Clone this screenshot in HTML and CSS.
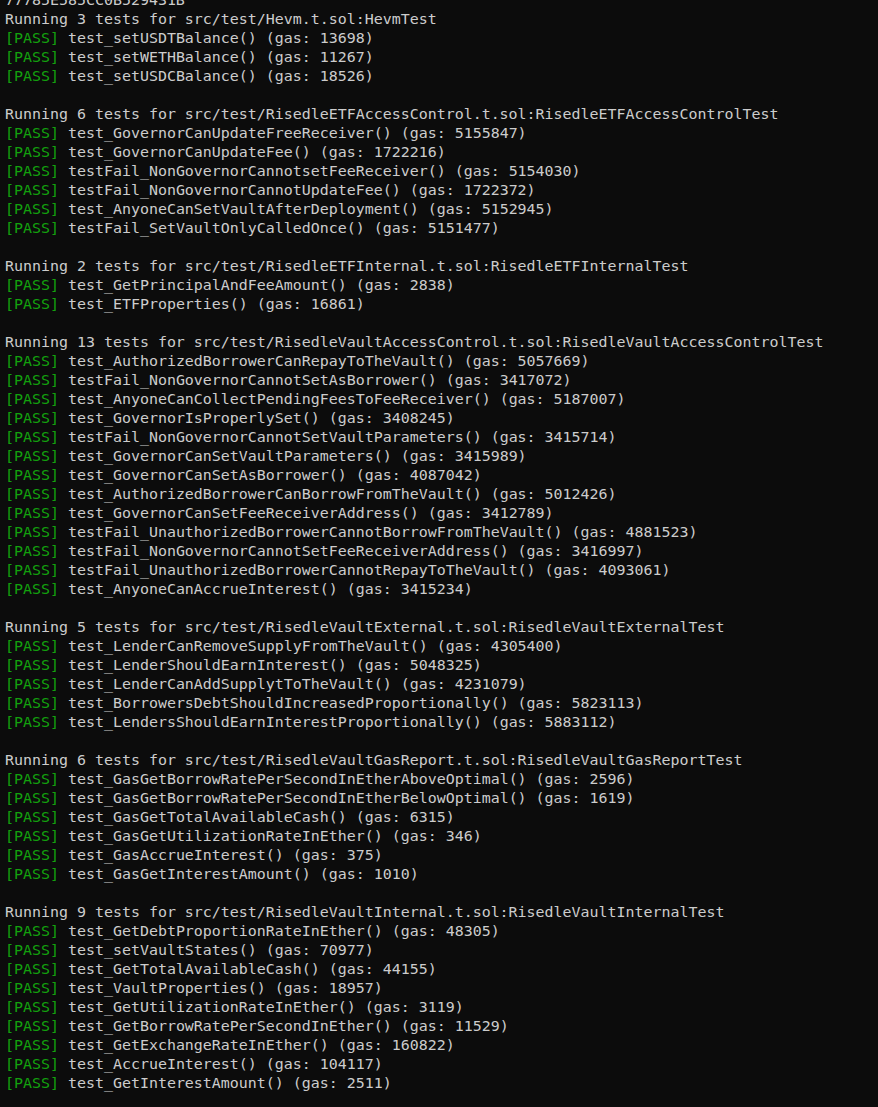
FILE: index.html
```html
<!DOCTYPE html>
<html>
<head>
<meta charset="utf-8">
<link rel="stylesheet" href="styles.css">
</head>
<body>
<pre class="term">77785E585CC0B529431B
Running 3 tests for src/test/Hevm.t.sol:HevmTest
<span class="pass">[PASS]</span> test_setUSDTBalance() (gas: 13698)
<span class="pass">[PASS]</span> test_setWETHBalance() (gas: 11267)
<span class="pass">[PASS]</span> test_setUSDCBalance() (gas: 18526)

Running 6 tests for src/test/RisedleETFAccessControl.t.sol:RisedleETFAccessControlTest
<span class="pass">[PASS]</span> test_GovernorCanUpdateFreeReceiver() (gas: 5155847)
<span class="pass">[PASS]</span> test_GovernorCanUpdateFee() (gas: 1722216)
<span class="pass">[PASS]</span> testFail_NonGovernorCannotsetFeeReceiver() (gas: 5154030)
<span class="pass">[PASS]</span> testFail_NonGovernorCannotUpdateFee() (gas: 1722372)
<span class="pass">[PASS]</span> test_AnyoneCanSetVaultAfterDeployment() (gas: 5152945)
<span class="pass">[PASS]</span> testFail_SetVaultOnlyCalledOnce() (gas: 5151477)

Running 2 tests for src/test/RisedleETFInternal.t.sol:RisedleETFInternalTest
<span class="pass">[PASS]</span> test_GetPrincipalAndFeeAmount() (gas: 2838)
<span class="pass">[PASS]</span> test_ETFProperties() (gas: 16861)

Running 13 tests for src/test/RisedleVaultAccessControl.t.sol:RisedleVaultAccessControlTest
<span class="pass">[PASS]</span> test_AuthorizedBorrowerCanRepayToTheVault() (gas: 5057669)
<span class="pass">[PASS]</span> testFail_NonGovernorCannotSetAsBorrower() (gas: 3417072)
<span class="pass">[PASS]</span> test_AnyoneCanCollectPendingFeesToFeeReceiver() (gas: 5187007)
<span class="pass">[PASS]</span> test_GovernorIsProperlySet() (gas: 3408245)
<span class="pass">[PASS]</span> testFail_NonGovernorCannotSetVaultParameters() (gas: 3415714)
<span class="pass">[PASS]</span> test_GovernorCanSetVaultParameters() (gas: 3415989)
<span class="pass">[PASS]</span> test_GovernorCanSetAsBorrower() (gas: 4087042)
<span class="pass">[PASS]</span> test_AuthorizedBorrowerCanBorrowFromTheVault() (gas: 5012426)
<span class="pass">[PASS]</span> test_GovernorCanSetFeeReceiverAddress() (gas: 3412789)
<span class="pass">[PASS]</span> testFail_UnauthorizedBorrowerCannotBorrowFromTheVault() (gas: 4881523)
<span class="pass">[PASS]</span> testFail_NonGovernorCannotSetFeeReceiverAddress() (gas: 3416997)
<span class="pass">[PASS]</span> testFail_UnauthorizedBorrowerCannotRepayToTheVault() (gas: 4093061)
<span class="pass">[PASS]</span> test_AnyoneCanAccrueInterest() (gas: 3415234)

Running 5 tests for src/test/RisedleVaultExternal.t.sol:RisedleVaultExternalTest
<span class="pass">[PASS]</span> test_LenderCanRemoveSupplyFromTheVault() (gas: 4305400)
<span class="pass">[PASS]</span> test_LenderShouldEarnInterest() (gas: 5048325)
<span class="pass">[PASS]</span> test_LenderCanAddSupplytToTheVault() (gas: 4231079)
<span class="pass">[PASS]</span> test_BorrowersDebtShouldIncreasedProportionally() (gas: 5823113)
<span class="pass">[PASS]</span> test_LendersShouldEarnInterestProportionally() (gas: 5883112)

Running 6 tests for src/test/RisedleVaultGasReport.t.sol:RisedleVaultGasReportTest
<span class="pass">[PASS]</span> test_GasGetBorrowRatePerSecondInEtherAboveOptimal() (gas: 2596)
<span class="pass">[PASS]</span> test_GasGetBorrowRatePerSecondInEtherBelowOptimal() (gas: 1619)
<span class="pass">[PASS]</span> test_GasGetTotalAvailableCash() (gas: 6315)
<span class="pass">[PASS]</span> test_GasGetUtilizationRateInEther() (gas: 346)
<span class="pass">[PASS]</span> test_GasAccrueInterest() (gas: 375)
<span class="pass">[PASS]</span> test_GasGetInterestAmount() (gas: 1010)

Running 9 tests for src/test/RisedleVaultInternal.t.sol:RisedleVaultInternalTest
<span class="pass">[PASS]</span> test_GetDebtProportionRateInEther() (gas: 48305)
<span class="pass">[PASS]</span> test_setVaultStates() (gas: 70977)
<span class="pass">[PASS]</span> test_GetTotalAvailableCash() (gas: 44155)
<span class="pass">[PASS]</span> test_VaultProperties() (gas: 18957)
<span class="pass">[PASS]</span> test_GetUtilizationRateInEther() (gas: 3119)
<span class="pass">[PASS]</span> test_GetBorrowRatePerSecondInEther() (gas: 11529)
<span class="pass">[PASS]</span> test_GetExchangeRateInEther() (gas: 160822)
<span class="pass">[PASS]</span> test_AccrueInterest() (gas: 104117)
<span class="pass">[PASS]</span> test_GetInterestAmount() (gas: 2511)
</pre>
</body>
</html>
```

FILE: styles.css
```css
html, body {
  margin: 0;
  padding: 0;
  background: #0c0c0c;
  height: 100%;
  overflow: hidden;
}

.term {
  margin: -9px 0 0 0;
  padding: 0 0 0 5px;
  font-family: "DejaVu Sans Mono", "Liberation Mono", monospace;
  font-size: 14.95px;
  line-height: 19px;
  color: #cccccc;
  white-space: pre;
}

.pass {
  color: #13a10e;
}
```
